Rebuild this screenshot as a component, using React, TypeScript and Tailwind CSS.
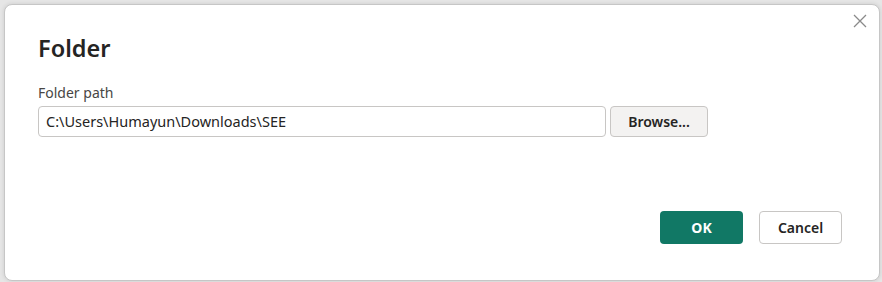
import React from "react";

export default function App() {
  return (
    <div
      className="w-[882px] h-[282px] bg-[#e6e6e6] pt-[4px] pl-[4px] pr-[2px] pb-[1px]"
      style={{ fontFamily: '"Noto Sans", "Open Sans", sans-serif' }}
    >
      <div className="relative w-[876px] h-[277px] bg-white rounded-[8px] border border-[#c6c6c6] shadow-[0_0_4px_rgba(0,0,0,0.12)] pl-[33px] pt-[28px]">
        <button className="absolute right-[10px] top-[7px] w-[18px] h-[18px] flex items-center justify-center">
          <svg width="16" height="16" viewBox="0 0 16 16">
            <path d="M2 2 L14 14 M14 2 L2 14" stroke="#8a8a8a" strokeWidth="1.3" fill="none" />
          </svg>
        </button>
        <div className="text-[23.5px] leading-[30px] font-semibold text-[#252423]">Folder</div>
        <div className="mt-[21px] text-[14px] leading-[18px] text-[#484644]">Folder path</div>
        <div className="mt-[4px] flex gap-[4px]">
          <div className="w-[568px] h-[31px] border border-[#c8c6c4] rounded-[4px] flex items-center px-[7px] text-[14.5px] text-[#252423]">
            C:\Users\Humayun\Downloads\SEE
          </div>
          <button className="w-[98px] h-[31px] border border-[#c8c6c4] rounded-[4px] bg-[#f3f2f1] text-[14px] font-semibold text-[#252423] flex items-center justify-center">
            Browse...
          </button>
        </div>
        <div className="absolute left-[655px] top-[206px] flex gap-[16px]">
          <button className="w-[83px] h-[33px] rounded-[4px] bg-[#117865] text-white text-[14px] font-bold flex items-center justify-center">
            OK
          </button>
          <button className="w-[83px] h-[33px] rounded-[4px] bg-white border border-[#c8c6c4] text-[14px] font-semibold text-[#252423] flex items-center justify-center">
            Cancel
          </button>
        </div>
      </div>
    </div>
  );
}
